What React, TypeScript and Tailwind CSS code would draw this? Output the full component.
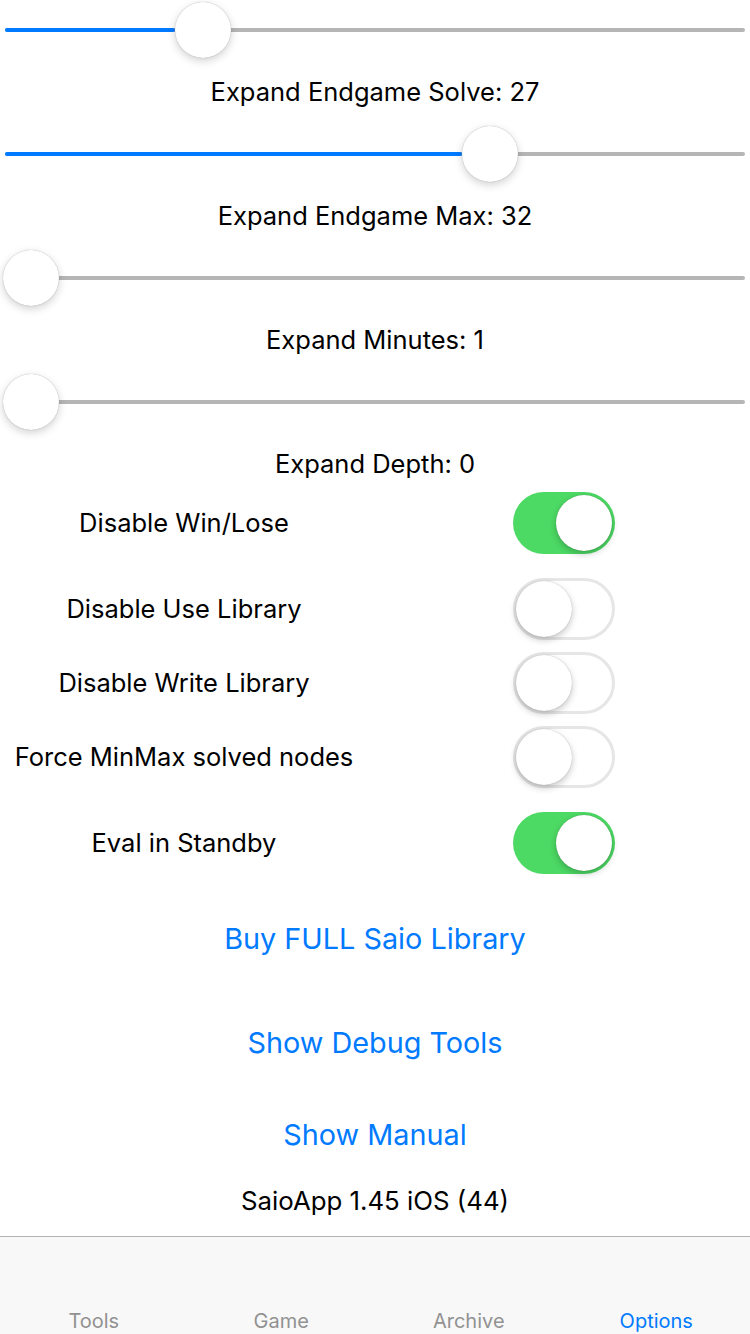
import React from "react";

const FONT = { fontFamily: "Inter, 'Noto Sans', sans-serif" };

interface SliderProps {
  value: number;
  min: number;
  max: number;
}

// 슬라이더: 트랙 위에 썸을 올려 표시
const Slider: React.FC<SliderProps> = ({ value, min, max }) => {
  const frac = (value - min) / (max - min);
  const thumbX = 31 + frac * 688;
  return (
    <div className="relative h-[60px] px-[5px] flex items-center">
      <div className="relative w-full h-[4px] rounded-full bg-[#b5b5b5]">
        <div
          className="absolute left-0 top-0 h-full rounded-full bg-[#007aff]"
          style={{ width: Math.max(0, thumbX - 28 - 5) }}
        />
      </div>
      <div
        className="absolute top-[2px] w-[56px] h-[56px] rounded-full bg-white shadow-[0_3px_8px_rgba(0,0,0,0.18),0_0_1px_rgba(0,0,0,0.35)]"
        style={{ left: thumbX - 28 }}
      />
    </div>
  );
};

const Label: React.FC<{ text: string }> = ({ text }) => (
  <div className="h-[64px] flex items-center justify-center text-[25.5px] text-black">
    {text}
  </div>
);

const Toggle: React.FC<{ on: boolean }> = ({ on }) => (
  <div
    className={`relative w-[102px] h-[62px] rounded-full ${
      on ? "bg-[#4cd964]" : "bg-white border-[3px] border-[#e6e6e6]"
    }`}
  >
    <div
      className={`absolute w-[56px] h-[56px] rounded-full bg-white shadow-[0_3px_7px_rgba(0,0,0,0.22),0_0_1px_rgba(0,0,0,0.3)] ${
        on ? "top-[3px] right-[3px]" : "top-0 left-0"
      }`}
    />
  </div>
);

const ToggleRow: React.FC<{ label: string; on: boolean; className?: string }> = ({
  label,
  on,
  className = "",
}) => (
  <div className={`flex items-center h-[62px] ${className}`}>
    <div className="w-[368px] text-center text-[25.5px] text-black">{label}</div>
    <div className="ml-[145px]">
      <Toggle on={on} />
    </div>
  </div>
);

export default function App() {
  return (
    <div className="h-screen flex flex-col bg-white" style={FONT}>
      <div className="flex-1 overflow-hidden">
        <Slider value={27} min={20} max={48} />
        <Label text="Expand Endgame Solve: 27" />
        <Slider value={32} min={20} max={38} />
        <Label text="Expand Endgame Max: 32" />
        <Slider value={1} min={1} max={10} />
        <Label text="Expand Minutes: 1" />
        <Slider value={0} min={0} max={10} />
        <Label text="Expand Depth: 0" />

        <ToggleRow label="Disable Win/Lose" on className="-mt-[4px]" />
        <ToggleRow label="Disable Use Library" on={false} className="mt-[24px]" />
        <ToggleRow label="Disable Write Library" on={false} className="mt-[12px]" />
        <ToggleRow label="Force MinMax solved nodes" on={false} className="mt-[12px]" />
        <ToggleRow label="Eval in Standby" on className="mt-[24px]" />

        <div className="mt-[47px] h-[36px] leading-[36px] text-center text-[28.8px] text-[#007aff]">
          Buy FULL Saio Library
        </div>
        <div className="mt-[68px] h-[36px] leading-[36px] text-center text-[28.8px] text-[#007aff]">
          Show Debug Tools
        </div>
        <div className="mt-[56px] h-[36px] leading-[36px] text-center text-[28.8px] text-[#007aff]">
          Show Manual
        </div>
        <div className="mt-[32px] h-[32px] leading-[32px] text-center text-[25.8px] text-black">
          SaioApp 1.45 iOS (44)
        </div>
      </div>

      <div className="h-[98px] bg-[#f8f8f8] border-t border-[#b2b2b2] grid grid-cols-4 items-end">
        {["Tools", "Game", "Archive", "Options"].map((t) => (
          <div
            key={t}
            className={`text-center text-[20px] leading-[24px] mb-[1px] ${
              t === "Options" ? "text-[#007aff]" : "text-[#929292]"
            }`}
          >
            {t}
          </div>
        ))}
      </div>
    </div>
  );
}
